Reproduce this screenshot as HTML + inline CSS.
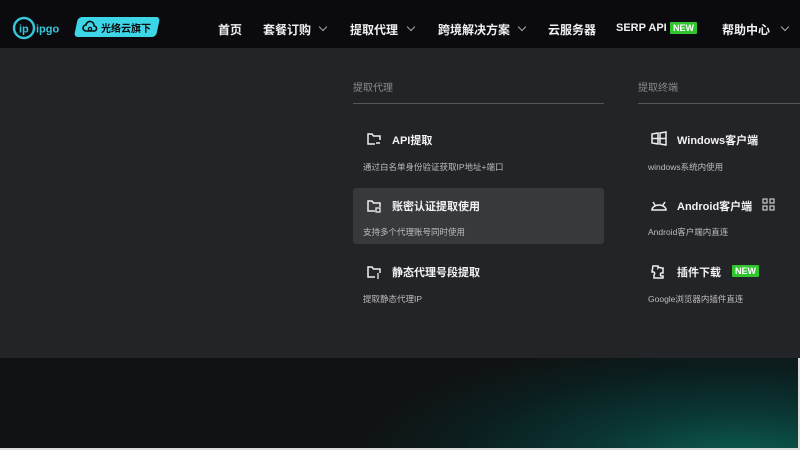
<!DOCTYPE html>
<html><head><meta charset="utf-8"><style>
*{margin:0;padding:0;box-sizing:border-box}
body{width:800px;height:450px;overflow:hidden;background:#111;font-family:"Liberation Sans","Noto Sans CJK SC",sans-serif;position:relative}
.hdr{position:absolute;left:0;top:0;width:800px;height:48px;background:#0b0b0f}
.drop{position:absolute;left:0;top:48px;width:800px;height:310px;background:#232428}
.hero{position:absolute;left:0;top:358px;width:800px;height:92px;background:radial-gradient(ellipse 380px 120px at 740px 100px,#0c5d52 0%,#0a3532 40%,#0b1d1e 75%,#101314 100%)}
.t{position:absolute;white-space:nowrap;color:#e8e8e8}
.nav{font-size:12px;font-weight:bold;top:21px;color:#f0f0f0}
.chev{position:absolute;top:24px;width:6px;height:6px;border-right:1.5px solid #aaa;border-bottom:1.5px solid #aaa;transform:rotate(45deg)}
.new{position:absolute;background:#2fc52c;color:#fff;font-size:9px;font-weight:bold;padding:0 3px;line-height:12px;border-radius:1px}
.sec{font-size:10px;color:#8a8a8e}
.line{position:absolute;height:1px;background:#55565a}
.ti{font-size:11px;font-weight:bold;color:#f2f2f2}
.de{font-size:8.5px;color:#bdbdc0}
svg{position:absolute}
</style></head><body>
<div class="hdr"></div>
<div class="drop"></div>
<div class="hero"></div>
<div style="position:absolute;left:0;top:448px;width:800px;height:2px;background:#ddd"></div>
<div style="position:absolute;left:798px;top:358px;width:2px;height:92px;background:#ddd"></div>

<svg style="left:12px;top:16px" width="60" height="26" viewBox="0 0 60 26">
<circle cx="12" cy="12" r="10" fill="none" stroke="#35c9d9" stroke-width="2.4"/>
<text x="7" y="16.5" font-size="11" font-weight="bold" fill="#35c9d9" font-family="Liberation Sans">ip</text>
<text x="24" y="16.5" font-size="11" font-weight="bold" fill="#35c9d9" font-family="Liberation Sans">ipgo</text>
</svg>
<div style="position:absolute;left:76px;top:17px;width:82px;height:20px;background:#3dd6e6;border-radius:4px;transform:skewX(-12deg)"></div>
<svg style="left:82px;top:20px" width="16" height="14" viewBox="0 0 16 14"><path d="M4 11a3 3 0 0 1 0-6 4 4 0 0 1 8 1 2.5 2.5 0 0 1 0 5z" fill="none" stroke="#0b0b0f" stroke-width="1.6"/><circle cx="8" cy="9" r="1.6" fill="none" stroke="#0b0b0f" stroke-width="1.3"/></svg>
<div class="t" style="left:101px;top:20px;font-size:10px;font-weight:bold;color:#0b0b0f">光络云旗下</div>

<div class="t nav" style="left:218px">首页</div>
<div class="t nav" style="left:263px">套餐订购</div><div class="chev" style="left:320px"></div>
<div class="t nav" style="left:350px">提取代理</div><div class="chev" style="left:408px"></div>
<div class="t nav" style="left:438px">跨境解决方案</div><div class="chev" style="left:519px"></div>
<div class="t nav" style="left:548px">云服务器</div>
<div class="t nav" style="left:616px;font-size:11px;top:22px">SERP API</div><div class="new" style="left:670px;top:22px">NEW</div>
<div class="t nav" style="left:722px">帮助中心</div><div class="chev" style="left:782px"></div>

<div class="t sec" style="left:353px;top:79px">提取代理</div>
<div class="line" style="left:353px;top:103px;width:251px"></div>
<div class="t sec" style="left:638px;top:79px">提取终端</div>
<div class="line" style="left:638px;top:103px;width:162px"></div>

<div style="position:absolute;left:353px;top:188px;width:251px;height:56px;background:#38393d;border-radius:3px"></div>

<svg style="left:366px;top:131px" width="16" height="16" viewBox="0 0 16 16"><path d="M9 13H2V3h4l1.5 2H14v4" fill="none" stroke="#eee" stroke-width="1.5"/><path d="M10 12h4" stroke="#eee" stroke-width="1.5"/></svg>
<div class="t ti" style="left:392px;top:132px">API提取</div>
<div class="t de" style="left:363px;top:161px">通过白名单身份验证获取IP地址+端口</div>

<svg style="left:366px;top:198px" width="16" height="16" viewBox="0 0 16 16"><path d="M9 13H2V3h4l1.5 2H14v4" fill="none" stroke="#eee" stroke-width="1.5"/><rect x="10" y="10" width="4" height="4" fill="none" stroke="#eee" stroke-width="1.3"/></svg>
<div class="t ti" style="left:392px;top:198px">账密认证提取使用</div>
<div class="t de" style="left:363px;top:226px">支持多个代理账号同时使用</div>

<svg style="left:366px;top:264px" width="16" height="16" viewBox="0 0 16 16"><path d="M9 13H2V3h4l1.5 2H14v4" fill="none" stroke="#eee" stroke-width="1.5"/><path d="M12 9v6" stroke="#eee" stroke-width="1.3"/></svg>
<div class="t ti" style="left:392px;top:264px">静态代理号段提取</div>
<div class="t de" style="left:363px;top:293px">提取静态代理IP</div>

<svg style="left:651px;top:131px" width="16" height="15" viewBox="0 0 16 15"><path d="M1 3l6-1v11l-6-1z M9 2l6-1v13l-6-1z M1 7.5h14" fill="none" stroke="#eee" stroke-width="1.5"/></svg>
<div class="t ti" style="left:677px;top:132px">Windows客户端</div>
<div class="t de" style="left:648px;top:161px">windows系统内使用</div>

<svg style="left:650px;top:198px" width="18" height="14" viewBox="0 0 18 14"><path d="M3 4l2 3M15 4l-2 3M2 12a7 5 0 0 1 14 0z" fill="none" stroke="#eee" stroke-width="1.5"/></svg>
<div class="t ti" style="left:677px;top:198px">Android客户端</div>
<svg style="left:762px;top:198px" width="13" height="13" viewBox="0 0 13 13"><g fill="none" stroke="#ccc" stroke-width="1.2"><rect x="1" y="1" width="4" height="4"/><rect x="8" y="1" width="4" height="4"/><rect x="1" y="8" width="4" height="4"/><rect x="8" y="8" width="4" height="4"/></g></svg>
<div class="t de" style="left:648px;top:226px">Android客户端内直连</div>

<svg style="left:650px;top:263px" width="17" height="17" viewBox="0 0 17 17"><path d="M3 3h5v2a2 2 0 0 1 3 0v0h2v5h-2a2 2 0 0 0 0 3h2v2H4v-3a2 2 0 0 0 0-3H2z" fill="none" stroke="#eee" stroke-width="1.5"/></svg>
<div class="t ti" style="left:677px;top:264px">插件下载</div><div class="new" style="left:732px;top:265px">NEW</div>
<div class="t de" style="left:648px;top:293px">Google浏览器内插件直连</div>
</body></html>
